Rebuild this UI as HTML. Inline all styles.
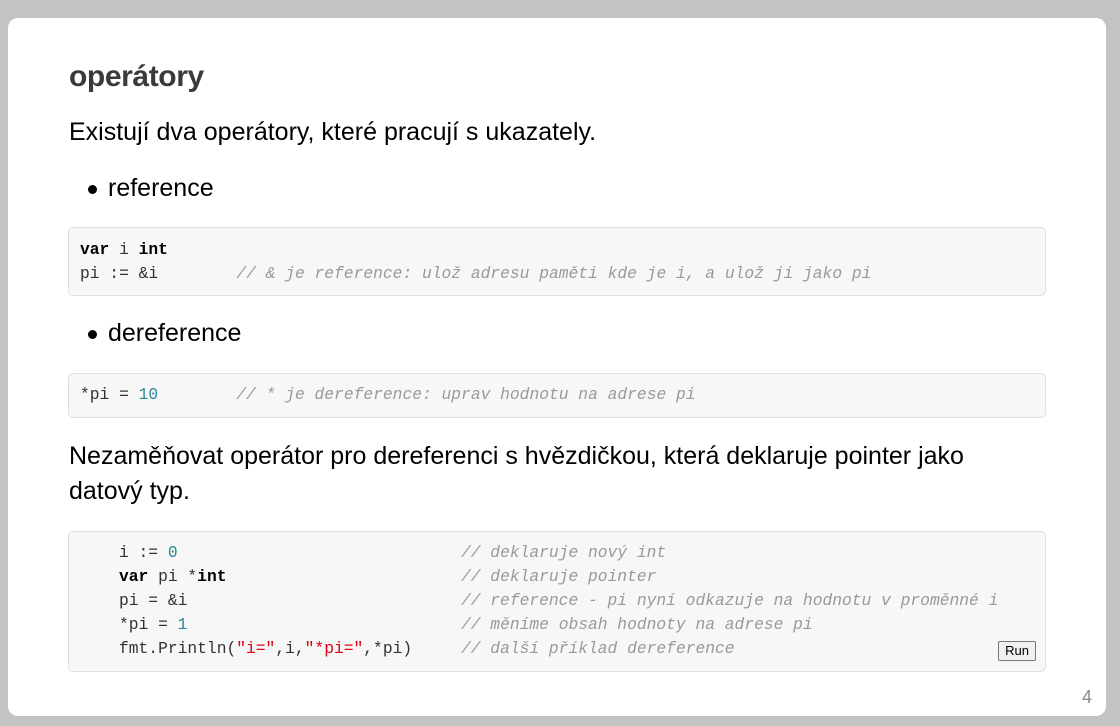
<!DOCTYPE html>
<html><head><meta charset="utf-8"><style>
body{margin:0;width:1120px;height:726px;background:#c3c3c3;position:relative;overflow:hidden;font-family:"Liberation Sans",sans-serif;}
.slide{position:absolute;left:8px;top:18px;width:1098px;height:698px;background:#fff;border-radius:10px;}
.t{position:absolute;left:61px;white-space:nowrap;color:#000;font-size:25px;letter-spacing:0px;}
h1{position:absolute;left:61px;top:42px;margin:0;font-size:30px;font-weight:bold;color:#3a3a3a;letter-spacing:-0.4px;}
.b{position:absolute;left:80px;width:9px;height:9px;border-radius:50%;background:#000;}
.code{position:absolute;left:60px;width:978px;background:#f7f7f7;border:1px solid #e0e0e0;border-radius:5px;font-family:"Liberation Mono",monospace;font-size:16.3px;line-height:24px;color:#333;white-space:pre;box-sizing:border-box;}
.k{font-weight:bold;color:#000}.n{color:#2a8a9b}.c{color:#999;font-style:italic}.s{color:#d01;}
.run{position:absolute;right:9px;bottom:10px;font-family:"Liberation Sans",sans-serif;font-size:13px;line-height:16px;padding:1px 6px;border:1px solid #777;border-radius:2px;background:#f0f0f0;color:#000;}
.pg{position:absolute;right:14px;bottom:8px;font-size:18px;color:#888;}
</style></head><body><div class="slide">
<h1>operátory</h1>
<div class="t" style="top:100px">Existují dva operátory, které pracují s ukazately.</div>
<div class="b" style="top:167px"></div>
<div class="t" style="top:156px;left:100px">reference</div>
<div class="code" style="top:209px;height:69px;padding:10px 0 0 11px;"><span class="k">var</span> i <span class="k">int</span>
pi := &amp;i        <span class="c">// &amp; je reference: ulož adresu paměti kde je i, a ulož ji jako pi</span></div>
<div class="b" style="top:312px"></div>
<div class="t" style="top:301px;left:100px">dereference</div>
<div class="code" style="top:355px;height:45px;padding:9px 0 0 11px;">*pi = <span class="n">10</span>        <span class="c">// * je dereference: uprav hodnotu na adrese pi</span></div>
<div class="t" style="top:424px">Nezaměňovat operátor pro dereferenci s hvězdičkou, která deklaruje pointer jako</div>
<div class="t" style="top:459px">datový typ.</div>
<div class="code" style="top:513px;height:141px;padding:9px 0 0 50px;">i := <span class="n">0</span>                             <span class="c">// deklaruje nový int</span>
<span class="k">var</span> pi *<span class="k">int</span>                        <span class="c">// deklaruje pointer</span>
pi = &amp;i                            <span class="c">// reference - pi nyní odkazuje na hodnotu v proměnné i</span>
*pi = <span class="n">1</span>                            <span class="c">// měníme obsah hodnoty na adrese pi</span>
fmt.Println(<span class="s">"i="</span>,i,<span class="s">"*pi="</span>,*pi)     <span class="c">// další příklad dereference</span><span class="run">Run</span></div>
<div class="pg">4</div>
</div></body></html>
